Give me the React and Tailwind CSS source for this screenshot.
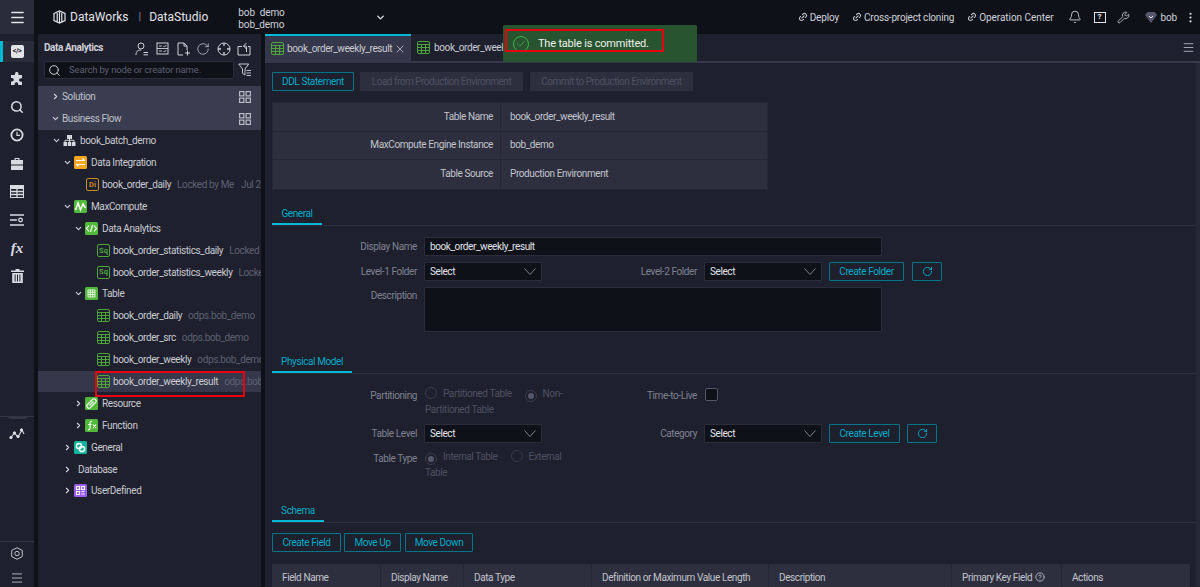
import { ChevronDown, ChevronRight, RotateCw, Search, Link2, Bell, Wrench, EllipsisVertical, Menu, CircleHelp, Check, X } from 'lucide-react'

const FONT = "font-['Roboto','Liberation_Sans',sans-serif]"

function TableIcon({ solid }) {
  if (solid) {
    return (
      <svg width="13" height="13" viewBox="0 0 13 13" className="shrink-0">
        <rect width="13" height="13" rx="1.5" fill="#52b83c" />
        <path d="M3 3h7v7H3zM3 5.3h7M3 7.6h7M5.3 3v7M7.7 3v7" stroke="#fff" strokeWidth="0.8" fill="none" />
      </svg>
    )
  }
  return (
    <svg width="13" height="13" viewBox="0 0 13 13" className="shrink-0">
      <rect x="0.5" y="0.5" width="12" height="12" rx="1.5" fill="none" stroke="#4ea53a" />
      <path d="M0.5 3.5h12M0.5 6.5h12M0.5 9.5h12M4.5 3.5v9M8.5 3.5v9" stroke="#4ea53a" strokeWidth="1" fill="none" />
    </svg>
  )
}

// coloured square with a small white drawing in it
function BadgeIcon({ color, children }) {
  return (
    <svg width="13" height="13" viewBox="0 0 13 13" className="shrink-0">
      <rect width="13" height="13" rx="1.5" fill={color} />
      <g fill="none" stroke="#fff" strokeWidth="1.1">{children}</g>
    </svg>
  )
}

function OutlineBadge({ color, label }) {
  return (
    <span className={`flex h-[13px] w-[13px] shrink-0 items-center justify-center rounded-[2px] border text-[7.5px] font-bold tracking-normal ${color}`}>{label}</span>
  )
}

function FlowIcon() {
  return (
    <svg width="13" height="13" viewBox="0 0 13 13" className="shrink-0" fill="#d5d7de">
      <rect x="4" y="1" width="5" height="4" />
      <rect x="0.5" y="8" width="3.5" height="4" />
      <rect x="4.8" y="8" width="3.5" height="4" />
      <rect x="9" y="8" width="3.5" height="4" />
      <path d="M2 8V6.3h9V8M6.5 5v3" stroke="#d5d7de" fill="none" />
    </svg>
  )
}

function GridIcon() {
  return (
    <svg width="12" height="12" viewBox="0 0 12 12" fill="none" stroke="#c3c5cd" strokeWidth="1.1">
      <rect x="0.6" y="0.6" width="4.3" height="4.3" />
      <rect x="7.1" y="0.6" width="4.3" height="4.3" />
      <rect x="0.6" y="7.1" width="4.3" height="4.3" />
      <rect x="7.1" y="7.1" width="4.3" height="4.3" />
    </svg>
  )
}

function TreeRow({ pad, open, leaf, icon, name, meta, selected, marked }) {
  return (
    <div className={`relative flex h-[21.9px] items-center whitespace-nowrap ${pad} ${selected ? 'bg-[#35374a]' : ''}`}>
      {!leaf && (
        <span className="flex w-[11px] shrink-0 items-center">
          {open ? <ChevronDown size={9} strokeWidth={3} color="#d0d2d9" /> : <ChevronRight size={9} strokeWidth={3} color="#d0d2d9" />}
        </span>
      )}
      {icon}
      <span className={`text-[#c9cbd2] ${leaf ? 'ml-[3px]' : 'ml-[4px]'}`}>{name}</span>
      {meta && <span className="ml-[6px] text-[#5d6072]">{meta}</span>}
      {marked && <span className="absolute left-[57px] top-0 h-[26px] w-[150px] border-2 border-[#e60012]" />}
    </div>
  )
}

function SectionRow({ open, name }) {
  return (
    <div className="flex h-[21.9px] items-center justify-between bg-[#3a3c50] pl-[13px] pr-[10px]">
      <span className="flex items-center gap-[2px] text-[#bfc1c9]">
        {open ? <ChevronDown size={9} strokeWidth={3} color="#d0d2d9" /> : <ChevronRight size={9} strokeWidth={3} color="#d0d2d9" />}
        {name}
      </span>
      <GridIcon />
    </div>
  )
}

function Tree() {
  return (
    <div className="text-[10px] tracking-[-0.38px]">
      <SectionRow name="Solution" />
      <SectionRow open name="Business Flow" />
      <TreeRow pad="pl-[14px]" open icon={<FlowIcon />} name="book_batch_demo" />
      <TreeRow pad="pl-[25px]" open icon={<BadgeIcon color="#f5a623"><path d="M2 4.5h9M8.5 2.5l2 2M11 8.5H2M4.5 10.5l-2-2" /></BadgeIcon>} name="Data Integration" />
      <TreeRow pad="pl-[48px]" leaf icon={<OutlineBadge color="border-[#c98a1f] text-[#c98a1f]" label="Di" />} name="book_order_daily" meta={<span>Locked by Me<span className="ml-[7px]">Jul 29</span></span>} />
      <TreeRow pad="pl-[25px]" open icon={<BadgeIcon color="#52b83c"><path d="M1.5 10 4 3l2.5 7L9 4l2.5 4" strokeWidth="1.5" /></BadgeIcon>} name="MaxCompute" />
      <TreeRow pad="pl-[36px]" open icon={<BadgeIcon color="#52b83c"><path d="M4 3.5 1.5 6.5 4 9.5M9 3.5l2.5 3-2.5 3M7.5 3 5.5 10" /></BadgeIcon>} name="Data Analytics" />
      <TreeRow pad="pl-[59px]" leaf icon={<OutlineBadge color="border-[#4ea53a] text-[#4ea53a]" label="Sq" />} name="book_order_statistics_daily" meta="Locked by Me" />
      <TreeRow pad="pl-[59px]" leaf icon={<OutlineBadge color="border-[#4ea53a] text-[#4ea53a]" label="Sq" />} name="book_order_statistics_weekly" meta="Locked by Me" />
      <TreeRow pad="pl-[36px]" open icon={<TableIcon solid />} name="Table" />
      <TreeRow pad="pl-[59px]" leaf icon={<TableIcon />} name="book_order_daily" meta="odps.bob_demo" />
      <TreeRow pad="pl-[59px]" leaf icon={<TableIcon />} name="book_order_src" meta="odps.bob_demo" />
      <TreeRow pad="pl-[59px]" leaf icon={<TableIcon />} name="book_order_weekly" meta="odps.bob_demo" />
      <TreeRow pad="pl-[59px]" leaf selected marked icon={<TableIcon />} name="book_order_weekly_result" meta="odps.bob_demo" />
      <TreeRow pad="pl-[36px]" icon={<BadgeIcon color="#52b83c"><path d="M2.5 7.5 7.5 2.5a2 2 0 0 1 3 3l-5 5a2 2 0 0 1-3-3zM4.5 8.5l4-4" /></BadgeIcon>} name="Resource" />
      <TreeRow pad="pl-[36px]" icon={<BadgeIcon color="#52b83c"><path d="M7 2.5C5.5 2 5 3 5 4.5V9c0 1.5-1 2-2 1.5M3 5.5h3.5M8 5.5l3 3.5M11 5.5 8 9" /></BadgeIcon>} name="Function" />
      <TreeRow pad="pl-[25px]" icon={<BadgeIcon color="#10b39b"><circle cx="5" cy="5" r="2.6" strokeWidth="1.5" /><circle cx="8" cy="8" r="2.6" strokeWidth="1.5" /></BadgeIcon>} name="General" />
      <TreeRow pad="pl-[25px]" name="Database" />
      <TreeRow pad="pl-[25px]" icon={<BadgeIcon color="#9a5ff0"><path d="M2.5 2.5h3v3h-3zM7.5 2.5h3v3h-3zM2.5 7.5h3v3h-3zM7.5 7.5h3M7.5 10h3" /></BadgeIcon>} name="UserDefined" />
    </div>
  )
}

function RailIcon({ children }) {
  return <div className="flex h-[28.2px] shrink-0 items-center justify-center text-[#d9dbe2]">{children}</div>
}

function Rail() {
  return (
    <aside className="flex w-[34px] shrink-0 flex-col bg-[#1e202d]">
      <div className="flex h-[34px] shrink-0 items-center justify-center bg-[#2a2c3a] text-[#e3e4e9]">
        <Menu size={17} strokeWidth={2} />
      </div>
      <div className="mt-[7px] flex h-[21px] shrink-0 items-center justify-center border-l-[3px] border-[#00b8d4] bg-[#2a2c3a] pr-[3px]">
        <span className="flex h-[13px] w-[13px] items-center justify-center rounded-[2px] bg-[#e3e4e9] text-[7px] font-bold tracking-[-0.5px] text-[#1e202d]">{'</>'}</span>
      </div>
      <div className="mt-[3px]" />
      <RailIcon>
        <svg width="14" height="14" viewBox="0 0 14 14" fill="#d9dbe2"><path d="M5 1.5a1.8 1.8 0 0 1 3.5 0V3h3.5v3.2h-1.2a1.8 1.8 0 0 0 0 3.6H12V13H8.2v-1a1.8 1.8 0 0 0-3.6 0v1H1V9.5h1a1.8 1.8 0 0 0 0-3.6H1V3h4z" /></svg>
      </RailIcon>
      <RailIcon><Search size={14} strokeWidth={2.6} /></RailIcon>
      <RailIcon>
        <svg width="14" height="14" viewBox="0 0 14 14" fill="none" stroke="#d9dbe2" strokeWidth="1.8"><circle cx="7" cy="7" r="5.6" /><path d="M7 3.8V7.4H10" strokeWidth="1.2" /></svg>
      </RailIcon>
      <RailIcon>
        <svg width="14" height="13" viewBox="0 0 14 13" fill="#d9dbe2"><path d="M4.5 3V1h5v2H13v4.5H1V3zM5.7 2.1V3h2.6v-.9zM1 8.5h12V13H1z" /></svg>
      </RailIcon>
      <RailIcon>
        <svg width="14" height="13" viewBox="0 0 14 13" fill="none" stroke="#d9dbe2"><rect x="0.5" y="0.5" width="13" height="12" fill="none" strokeWidth="1" /><rect x="0.5" y="0.5" width="13" height="3" fill="#d9dbe2" /><path d="M1 6.5h12M1 9.5h12M7 3.5v9" strokeWidth="1.3" /></svg>
      </RailIcon>
      <RailIcon>
        <svg width="14" height="12" viewBox="0 0 14 12" fill="none" stroke="#d9dbe2" strokeWidth="1.3"><path d="M0 1h14M0 6h7M0 11h14" /><circle cx="10.5" cy="6" r="1.8" /></svg>
      </RailIcon>
      <RailIcon><span className="font-['Liberation_Serif',serif] text-[15px] font-bold italic">fx</span></RailIcon>
      <RailIcon>
        <svg width="13" height="14" viewBox="0 0 13 14" fill="#d9dbe2"><path d="M4.5 0h4v1.5H13V3H0V1.5h4.5zM1.2 4h10.6v10H1.2zM3.6 5.5v7h1v-7zM6 5.5v7h1v-7zM8.4 5.5v7h1v-7z" fillRule="evenodd" /></svg>
      </RailIcon>
      <div className="mt-[125px] shrink-0 border-t border-[#333545]" />
      <div className="mx-auto h-[2px] w-[19px] shrink-0 rounded-b-[2px] bg-[#333545]" />
      <div className="mt-px flex h-[28px] shrink-0 items-center justify-center">
        <svg width="16" height="12" viewBox="0 0 16 12" fill="#d9dbe2" stroke="#d9dbe2"><path d="M1 10.5 5.5 5l3.5 4L13 2l2 4" fill="none" strokeWidth="1.1" /><circle cx="2" cy="9.5" r="1.2" /><circle cx="5.5" cy="5" r="1.2" /><circle cx="9" cy="8.5" r="1.2" /><circle cx="12.5" cy="2" r="1.2" /></svg>
      </div>
      <div className="mt-[93px] shrink-0 border-t border-[#333545]" />
      <div className="flex h-[23px] shrink-0 items-center justify-center">
        <svg width="12" height="13" viewBox="0 0 12 13" fill="none" stroke="#c3c5cd" strokeWidth="1"><path d="M6 .7 11.3 3.5v6L6 12.3.7 9.5v-6z" /><circle cx="6" cy="6.5" r="2.2" /></svg>
      </div>
      <div className="flex h-[26px] shrink-0 items-center justify-center text-[#b6b8c0]">
        <Menu size={14} strokeWidth={1.6} />
      </div>
    </aside>
  )
}

function PanelTool({ children }) {
  return <span className="flex h-[14px] w-[14px] items-center justify-center text-[#d0d2d9]">{children}</span>
}

function SidePanel() {
  return (
    <section className="ml-[4px] flex w-[223px] shrink-0 flex-col bg-[#1e202d]">
      <div className="flex h-[27px] items-center pl-[6px] pr-[10px]">
        <span className="text-[10px] font-bold tracking-[-0.4px] text-[#cfd1d8]">Data Analytics</span>
        <div className="ml-auto mt-[2px] flex gap-[6.4px]">
          <PanelTool><svg width="14" height="14" viewBox="0 0 14 14" fill="none" stroke="currentColor"><circle cx="6" cy="4" r="3" /><path d="M1 13c0-4 2-5 5-5M8.5 10.5H13M8.5 12.8H13" /></svg></PanelTool>
          <PanelTool><svg width="13" height="13" viewBox="0 0 13 13" fill="none" stroke="currentColor"><rect x="1" y="1" width="11" height="11" /><path d="M1 6.5h11M3 4h3M7.5 4l1 1 1.7-2M3 9h3M7.5 9l1 1 1.7-2" strokeWidth="0.9" /></svg></PanelTool>
          <PanelTool><svg width="14" height="14" viewBox="0 0 14 14" fill="none" stroke="currentColor"><path d="M7 13H2V1h6l3 3v4M8 1v3h3M9 11h5M11.5 8.5v5" /></svg></PanelTool>
          <PanelTool><RotateCw size={14} strokeWidth={1.2} /></PanelTool>
          <PanelTool><svg width="14" height="14" viewBox="0 0 14 14" fill="none" stroke="currentColor"><circle cx="7" cy="7" r="6" /><path d="M7 1v3M7 10v3M1 7h3M10 7h3" strokeWidth="1.3" /></svg></PanelTool>
          <PanelTool><svg width="14" height="14" viewBox="0 0 14 14" fill="none" stroke="currentColor"><path d="M5 4.5H1v8.5h12V4.5h-2M9.5 1 6.5 4l3 3M6.5 4h2a1 1 0 0 1 1 1v5" /></svg></PanelTool>
        </div>
      </div>
      <div className="flex h-[18px] items-center pl-[6px] pr-[9px]">
        <div className="flex h-[18px] w-[190px] items-center gap-[8px] rounded-[2px] border border-[#2b2d3b] bg-[#0e1118] pl-[3px]">
          <Search size={13} color="#d0d2d9" strokeWidth={1.8} />
          <span className="text-[9.5px] tracking-[-0.15px] text-[#5d6072]">Search by node or creator name.</span>
        </div>
        <svg width="14" height="14" viewBox="0 0 14 14" fill="none" stroke="#c3c5cd" className="ml-auto"><path d="M.7 1h10L7 6v6L4.5 10.5V6zM8.5 7.5H13M8.5 10H13M8.5 12.5H13" /></svg>
      </div>
      <div className="mt-[7px] overflow-hidden">
        <Tree />
      </div>
    </section>
  )
}

function Btn({ children, className = '' }) {
  return (
    <button className={`flex h-[19px] shrink-0 items-center justify-center rounded-[1px] border border-[#00758a] text-[10px] text-[#00abc7] ${className}`}>{children}</button>
  )
}

function Disabled({ children, className = '' }) {
  return (
    <button className={`flex h-[19px] shrink-0 items-center justify-center rounded-[1px] bg-[#2d2f3e] text-[10px] tracking-[-0.5px] text-[#4e5062] ${className}`}>{children}</button>
  )
}

function Select({ className = '' }) {
  return (
    <div className={`flex h-[19px] w-[118px] shrink-0 items-center justify-between rounded-[1px] border border-[#2b2d3b] bg-[#0e1118] px-[5px] text-[10px] text-[#e3e4e9] ${className}`}>
      Select
      <svg width="12" height="7" viewBox="0 0 12 7" fill="none" stroke="#7b7e8d"><path d="M.5.5 6 6.5 11.5.5" /></svg>
    </div>
  )
}

function Label({ children, className = 'w-[145px]' }) {
  return <span className={`shrink-0 text-right text-[10px] text-[#7f8292] ${className}`}>{children}</span>
}

function Section({ title, underline, className = '' }) {
  return (
    <div className={`border-b border-[#2d2f3e] ${className}`}>
      <div className={`flex h-[20px] items-start justify-center border-b-2 border-[#00b8d4] pt-px text-[10px] text-[#00abc7] ${underline}`}>{title}</div>
    </div>
  )
}

function Radio({ on }) {
  return (
    <span className="mr-[6px] inline-flex h-[12px] w-[12px] items-center justify-center rounded-full border border-[#3a3c4e] align-[-2px]">
      {on && <span className="h-[6px] w-[6px] rounded-full bg-[#55586a]" />}
    </span>
  )
}

function InfoRow({ label, value, last, h }) {
  return (
    <div className={`flex items-center ${h} ${last ? '' : 'border-b border-[#252735]'}`}>
      <span className="flex h-full w-[228px] items-center justify-end border-r border-[#252735] pb-[2px] pr-[7px] text-[#c3c5cd]">{label}</span>
      <span className="pb-[2px] pl-[9px] text-[#c3c5cd]">{value}</span>
    </div>
  )
}

function Editor() {
  return (
    <div className="flex-1 overflow-hidden border-r-[4px] border-[#262836] pl-[7px] pt-[9px] text-[10px] tracking-[-0.4px]">
      <div className="flex gap-[6px]">
        <Btn className="w-[82px]">DDL Statement</Btn>
        <Disabled className="w-[163px]">Load from Production Environment</Disabled>
        <Disabled className="ml-px w-[163px]">Commit to Production Environment</Disabled>
      </div>

      <div className="mt-[11px] w-[496px] border border-[#252735] bg-[#2d2f3e]">
        <InfoRow h="h-[29px]" label="Table Name" value="book_order_weekly_result" />
        <InfoRow h="h-[28px]" label="MaxCompute Engine Instance" value="bob_demo" />
        <InfoRow h="h-[29px]" last label="Table Source" value="Production Environment" />
      </div>

      <Section title="General" underline="w-[50px]" className="mt-[15px]" />

      <div className="mt-[11px] flex h-[19px] items-center">
        <Label className="-mt-px w-[145px]">Display Name</Label>
        <div className="ml-[7px] flex h-[19px] w-[458px] items-center rounded-[1px] border border-[#2b2d3b] bg-[#0e1118] px-[5px] text-[#e3e4e9]">book_order_weekly_result</div>
      </div>
      <div className="mt-[6px] flex h-[19px] items-center">
        <Label>Level-1 Folder</Label>
        <Select className="ml-[7px]" />
        <Label className="w-[155px]">Level-2 Folder</Label>
        <Select className="ml-[7px]" />
        <Btn className="ml-[7px] w-[75px]">Create Folder</Btn>
        <Btn className="ml-[8px] w-[30px]"><RotateCw size={11} strokeWidth={2} /></Btn>
      </div>
      <div className="mt-[6px] flex items-start">
        <Label className="mt-px w-[145px]">Description</Label>
        <div className="ml-[7px] h-[45px] w-[458px] rounded-[1px] border border-[#2b2d3b] bg-[#0e1118]" />
      </div>

      <Section title="Physical Model" underline="w-[80px]" className="mt-[21px]" />

      <div className="mt-[12px] flex items-start">
        <Label className="mt-[2px] w-[145px]">Partitioning</Label>
        <div className="ml-[8px] w-[142px] leading-[15.5px] text-[#4e5062]">
          <Radio />Partitioned Table
          <span className="ml-[13px]"><Radio on /></span>Non-Partitioned Table
        </div>
        <Label className="mt-[2px] w-[130px]">Time-to-Live</Label>
        <span className="ml-[8px] mt-[2px] h-[13px] w-[13px] rounded-[2px] border border-[#55586a] bg-[#0e1118]" />
      </div>
      <div className="mt-[6px] flex h-[19px] items-center">
        <Label>Table Level</Label>
        <Select className="ml-[7px]" />
        <Label className="w-[155px]">Category</Label>
        <Select className="ml-[7px]" />
        <Btn className="ml-[7px] w-[71px]">Create Level</Btn>
        <Btn className="ml-[7px] w-[30px]"><RotateCw size={11} strokeWidth={2} /></Btn>
      </div>
      <div className="mt-[6px] flex items-start">
        <Label className="mt-[2px] w-[145px]">Table Type</Label>
        <div className="ml-[8px] w-[142px] leading-[15.5px] text-[#4e5062]">
          <Radio on />Internal Table
          <span className="ml-[13px]"><Radio /></span>External Table
        </div>
      </div>

      <Section title="Schema" underline="w-[52px]" className="mt-[22px]" />

      <div className="mt-[10px] flex gap-[3px]">
        <Btn className="w-[69px]">Create Field</Btn>
        <Btn className="w-[57px]">Move Up</Btn>
        <Btn className="ml-px w-[68px]">Move Down</Btn>
      </div>

      <div className="mt-[12px] flex h-[26px] w-[918px] items-center bg-[#2d2f3e] text-[#c3c5cd]">
        <span className="flex h-full w-[109px] items-center border-r border-[#252735] pl-[10px]">Field Name</span>
        <span className="flex h-full w-[83px] items-center border-r border-[#252735] pl-[10px]">Display Name</span>
        <span className="flex h-full w-[128px] items-center border-r border-[#252735] pl-[10px]">Data Type</span>
        <span className="flex h-full w-[177px] items-center border-r border-[#252735] pl-[10px]">Definition or Maximum Value Length</span>
        <span className="flex h-full w-[183px] items-center border-r border-[#252735] pl-[10px]">Description</span>
        <span className="flex h-full w-[110px] items-center gap-[3px] border-r border-[#252735] pl-[10px]">Primary Key Field <CircleHelp size={10} /></span>
        <span className="pl-[10px]">Actions</span>
      </div>
    </div>
  )
}

function TopBar() {
  return (
    <header className="flex h-[34px] items-center bg-[#0e1118] pl-[53px] text-[#d0d2d9]">
      <svg width="13" height="14" viewBox="0 0 13 14" fill="none" stroke="#e3e4e9"><path d="M1 3.5 6.5 1 12 3.5v7L6.5 13 1 10.5zM4.2 3v8.8M6.5 2v11M8.8 3v8.8" strokeWidth="1.2" /></svg>
      <span className="ml-[4px] text-[12px] text-[#e3e4e9]">DataWorks</span>
      <span className="ml-[10px] text-[11px] text-[#8a8d9c]">|</span>
      <span className="ml-[8px] text-[12px] text-[#e3e4e9]">DataStudio</span>
      <div className="ml-[30px] mt-[3px] flex w-[137px] flex-col text-[10px] leading-[12px] tracking-[-0.1px]">
        <span>bob&nbsp;&nbsp;demo</span>
        <span>bob_demo</span>
      </div>
      <ChevronDown size={11} strokeWidth={3} color="#e3e4e9" />
      <nav className="ml-auto flex items-center text-[10px] tracking-[-0.15px]">
        <Link2 size={10} strokeWidth={2.4} className="-rotate-45" /><span className="ml-[2px]">Deploy</span>
        <Link2 size={10} strokeWidth={2.4} className="ml-[13px] -rotate-45" /><span className="ml-[2px] tracking-[-0.2px]">Cross-project cloning</span>
        <Link2 size={10} strokeWidth={2.4} className="ml-[13px] -rotate-45" /><span className="ml-[2px] tracking-[-0.05px]">Operation Center</span>
        <Bell size={14} className="ml-[14px]" strokeWidth={1.4} color="#e3e4e9" />
        <span className="ml-[12px] flex h-[11px] w-[12px] items-center justify-center border border-[#e3e4e9] text-[8px] font-bold text-[#e3e4e9]">?</span>
        <Wrench size={13} className="ml-[11px]" strokeWidth={1.4} color="#e3e4e9" />
        <svg width="12" height="11" viewBox="0 0 12 11" className="ml-[15px]"><path d="M2.5 0h7L12 3 6 11 0 3z" fill="#55586a" /><path d="M4 4l2 2 2-2" stroke="#e3e4e9" fill="none" /></svg>
        <span className="ml-[4px]">bob</span>
        <EllipsisVertical size={13} className="ml-[7px] mr-[3px]" color="#e3e4e9" />
      </nav>
    </header>
  )
}

function Tabs() {
  return (
    <div className="flex h-[29px] items-stretch border-b-2 border-[#35374a] bg-[#1e202d] text-[10px] tracking-[-0.38px] text-[#c9cbd2]">
      <div className="flex w-[146px] items-center border-t-2 border-[#00b8d4] bg-[#35374a] pl-[6px]">
        <TableIcon />
        <span className="ml-[3px]">book_order_weekly_result</span>
        <X size={12} strokeWidth={1.5} className="ml-[2px]" />
      </div>
      <div className="flex items-center pl-[6px]">
        <TableIcon />
        <span className="ml-[4px]">book_order_weekly_result</span>
      </div>
      <div className="ml-auto flex items-center pr-[5px] text-[#a8aab4]">
        <Menu size={13} strokeWidth={1.8} />
      </div>
    </div>
  )
}

export default function App() {
  return (
    <div className={`relative flex h-[587px] w-[1200px] flex-col overflow-hidden bg-[#0e1118] ${FONT}`}>
      <div className="absolute left-0 top-0 flex h-[587px]">
        <Rail />
      </div>
      <TopBar />
      <div className="flex min-h-0 flex-1 pl-[34px]">
        <SidePanel />
        <main className="ml-[4px] flex w-[935px] shrink-0 flex-col overflow-hidden bg-[#1e202d]">
          <Tabs />
          <Editor />
        </main>
      </div>

      <div className="absolute left-[503px] top-[25px] flex h-[37px] w-[194px] items-start rounded-[2px] bg-[#28542f] pl-[10px] pt-[11px] text-[11px] tracking-[-0.2px] text-[#eef0ee]">
        <span className="flex h-[16px] w-[16px] items-center justify-center rounded-full border border-[#3fb24a] text-[#3fb24a]"><Check size={10} /></span>
        <span className="ml-[9px]">The table is committed.</span>
      </div>
      <div className="absolute left-[505px] top-[29px] h-[23px] w-[159px] border-2 border-[#e60012]" />
    </div>
  )
}
